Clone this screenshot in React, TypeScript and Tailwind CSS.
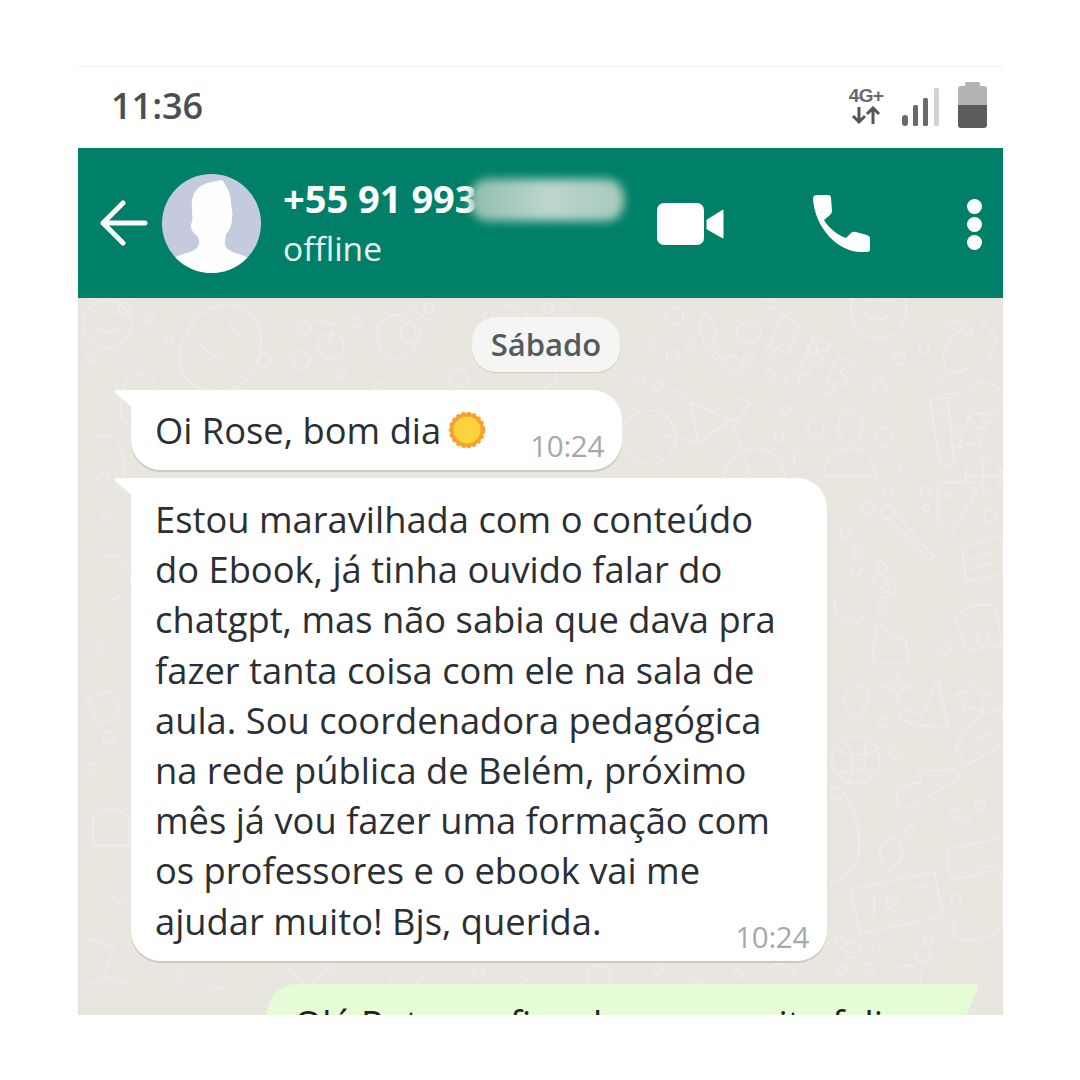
import type { ReactNode } from "react";

const font = "font-['Open_Sans','Noto_Sans',sans-serif]";

// wallpaper doodles, very faint, roughly where the whatsapp pattern puts them
const doodles = [
  // left column
  "M28 2a24 24 0 1 0 1 0zM14 28q14 12 28 0M16 14h6M34 14h6",
  "M140 8c26-6 44 10 42 40s-24 50-52 44-34-26-26-48 18-32 36-36zM122 46q8 12 24 14M150 26l10 10",
  "M50 80q18-12 28 8t-12 40l-22-4q-6-26 6-44zM56 120q8 6 16 0",
  "M12 140q24-10 32 14t-14 42M20 260q22-8 30 12t-18 30",
  "M8 400l24-8 10 26-24 8zM14 520q18-18 36 0v28H14zM8 640l28 10-10 26",
  // top middle
  "M300 30c6-18 30-18 36 0s-6 30-18 30-22-12-18-30zM330 8l20 14M230 20l26 6-6 22",
  "M420 10q20-8 30 8M440 60q22-10 34 8t-12 22",
  // phone and heart
  "M628 14q-8 6-6 18c4 18 14 32 32 42q10 4 14-4l-14-14-8 6q-10-8-12-20l6-6z",
  "M658 30q6-8 12-2 8-6 12 2t-12 16q-12-6-12-16z",
  // bff tags
  "M704 16l18 10-12 30-18-10zM736 38l16 8-4 8-8-4-2 6 8 4-4 8-8-4-6 14-8-4zM760 58l16 8-4 8-8-4-2 6 8 4-4 8-8-4-6 14-8-4z",
  // smiley
  "M800-16a28 28 0 1 0 1 0zM786 14q14 14 28 0M788 2h8M806 2h8",
  // bike
  "M570 112a27 27 0 1 0 1 0zM572 136l36-36-12-8-6 6M612 104l46 20 14-20-14-4M612 104l8 40 36-24M620 144l-40-8M654 126l18 54M676 150a30 30 0 1 0 1 0z",
  // people
  "M737 122a8 8 0 1 0 1 0zM772 112c8 0 13 8 12 18s-8 16-12 16-12-6-12-16 4-18 12-18zM805 130a9 9 0 1 0 1 0zM716 165q0-16 20-18M746 178c0-18 10-28 26-28s24 10 26 28zM804 154q16 4 20 22",
  // right top
  "M866 28q14-8 22-2l-14 14q-14 14-6 30 8 8 22 0M900 20l20 20-10 20M924 10q10 10 4 24M866 96l20-2q4 0 6-6 12-8 26 0 12 10 6 20-10 10-30 6l-6 6M858 100l-6 2 10 66 14-2-6-66z",
  // star, lemon, hat
  "M892 118l5 11 12 1-9 8 3 12-11-6-11 6 3-12-9-8 12-1zM905 160a18 18 0 1 0 1 0zM905 160v36M888 178h36M860 184h44l-30 50-14-10z",
  // brush, bolt, card
  "M808 218l8-4 40 44-4 4zM802 210q6-6 16 0l-4 12-10-2zM800 260l10 10-6 8 14 20-24-14 6-8zM884 250l40-14v40l-36 8zM892 262l24-8M892 272l24-8",
  "M768 296q-10 2-12 10 0 14 12 20M802 276q14 4 16 16-8 10-20 6M878 322q10-20 40-14l6 40-36 4zM800 324l14 16 14 2 2 22h-36l2-22z",
  // lower right
  "M774 390c8-6 18 0 16 10s-8 16-12 20c-6-4-12-10-12-18q0-8 8-12zM820 374l3 12 12 3-12 3-3 12-3-12-12-3 12-3zM895 384l5 10 12 2-9 7 2 12-10-6-11 6 3-12-9-7 12-2zM860 380l10 50-30-2-20-8 10-10 14 8zM878 450q16-34 46-40l4 34-40 24zM894 442l24-8",
  "M777 438a24 24 0 1 0 1 0zM755 450q22 14 46 0M757 476q22-8 44 0M766 442q14 22 4 42M790 442q-10 22 4 42M818 490l26-6-4-8 6-4 32 0 4 8-52 30-10 0zM850 478h10",
  "M768 500q16 24 12 60-12 20-28 26M810 542c8-4 14 2 14 12s-8 14-12 18c-6-4-12-10-10-18q0-8 8-12zM868 552l56-12M872 552q-8 14 4 30l50-12M900 570q24-8 24 14v46q-24 20-48 8v-20",
  "M772 592l84-18 10 44-84 18zM796 598v22M808 596l12 8-10 8zM836 590l14-2",
  // bottom left and middle
  "M8 690q20-20 44 0M120 680q8 12 24 10M210 672l18 18 20-18M310 680q16 18 34 0M440 676l18 14M520 668a12 12 0 1 0 1 0M610 680l30 12M690 670q16-10 28 6M818 672q14-8 26 2l-6 26",
];

const dots: [number, number, number][] = [
  [186, 62, 7], [226, 30, 6], [222, 62, 9], [46, 10, 6], [50, 62, 4], [252, 48, 13], [278, 24, 5], [262, 76, 5], [170, 104, 4], [300, 88, 4],
  [332, 34, 10], [350, 10, 5], [380, 80, 9], [410, 18, 5], [470, 10, 5], [492, 38, 7], [510, 24, 5], [488, 8, 4], [596, 18, 9], [576, 46, 4],
  [594, 58, 6], [613, 47, 5], [562, 80, 4], [580, 88, 5], [670, 61, 5], [692, 53, 5], [692, 77, 5], [714, 82, 7], [694, 6, 5], [734, 50, 5],
  [802, 90, 7], [821, 60, 6], [800, 80, 4], [846, 50, 5], [860, 85, 4], [866, 110, 5], [731, 94, 4], [708, 112, 5], [701, 138, 5], [889, 32, 5],
  [909, 120, 5], [878, 144, 5], [810, 192, 5], [847, 193, 5], [870, 196, 3], [848, 210, 3], [912, 218, 6], [790, 210, 6], [767, 235, 5], [780, 254, 6],
  [779, 320, 5], [805, 310, 6], [778, 272, 5], [867, 351, 5], [904, 340, 6], [805, 424, 5], [817, 455, 5], [902, 508, 5], [877, 516, 5], [889, 525, 4],
  [832, 533, 5], [759, 496, 6], [878, 602, 5], [762, 644, 6], [775, 652, 8], [798, 651, 4], [845, 656, 8], [850, 642, 4], [764, 672, 5], [790, 671, 5],
  [18, 350, 5], [30, 440, 6], [14, 470, 4], [40, 600, 5], [24, 180, 5], [26, 220, 4], [70, 20, 5], [88, 150, 4], [12, 60, 4], [90, 40, 4],
  [250, 670, 5], [400, 675, 5], [580, 672, 5], [660, 676, 4], [100, 678, 4],
];

function Wallpaper() {
  return (
    <svg
      className="absolute inset-0 h-full w-full"
      viewBox="0 0 925 717"
      fill="none"
      stroke="#eeece7"
      strokeWidth="1.6"
      strokeLinejoin="round"
      strokeLinecap="round"
    >
      {doodles.map((d, i) => (
        <path key={i} d={d} />
      ))}
      {dots.map(([cx, cy, r], i) => (
        <circle key={i} cx={cx} cy={cy} r={r} />
      ))}
    </svg>
  );
}

function StatusIcons() {
  return (
    <div className="flex items-center gap-[16px] pb-[5px]">
      <div className="flex w-[40px] flex-col items-center font-['Liberation_Sans',sans-serif] text-[#686868] leading-none">
        <span className="h-[20px] text-[19px] font-bold tracking-[-0.6px]">4G+</span>
        <svg width="30" height="19" viewBox="0 0 30 19" fill="none" stroke="#555" strokeWidth="3">
          <path d="M8 1v16M2 10l6 6 6-6M22 18V3M16 8l6-6 6 6" />
        </svg>
      </div>
      <svg width="38" height="39" viewBox="0 0 38 39" className="mt-[4px]">
        <rect x="0" y="27" width="6" height="11" rx="3" fill="#6a6a6a" />
        <rect x="11" y="17" width="5" height="21" rx="1.5" fill="#6a6a6a" />
        <rect x="21" y="10" width="5" height="28" rx="1.5" fill="#6a6a6a" />
        <rect x="32" y="0" width="5" height="38" rx="1" fill="#d2d2d2" />
      </svg>
      <div className="ml-[2px] flex w-[29px] flex-col items-center">
        <div className="h-[4px] w-[15px] rounded-t-[2px] bg-[#b3b3b3]" />
        <div className="h-[19px] w-full rounded-t-[3px] bg-[#b3b3b3]" />
        <div className="h-[23px] w-full rounded-b-[3px] bg-[#5c5c5c]" />
      </div>
    </div>
  );
}

function Avatar() {
  return (
    <div className="h-[99px] w-[99px] shrink-0 overflow-hidden rounded-full bg-[#c5cbde]">
      <svg viewBox="0 0 99 99" className="h-full w-full" fill="#fdfefd">
        <path d="M60 6c-8 1-18 3-24 8-5 5-7 12-6 20 0 6 1 11 0 14-2 3-1 7 1 10 2 2 5 4 6 8 1 5-2 9-7 11-7 3-14 4-20 8v14h78V85c-6-4-13-5-19-8-4-2-7-5-6-10l1-7c4-4 6-10 6-16 1-5 0-9-1-14 0-10-4-18-9-24z" />
      </svg>
    </div>
  );
}

function HeaderActions() {
  return (
    <div className="flex items-center pt-[2px]">
      <svg width="68" height="44" viewBox="0 0 68 44" fill="#fff">
        <rect x="0" y="1" width="47" height="42" rx="7" />
        <path d="M50 18 66 8v28L50 27z" strokeLinejoin="round" stroke="#fff" strokeWidth="1" />
      </svg>
      <svg width="60" height="60" viewBox="0 0 60 60" fill="#fff" className="ml-[87px]">
        <path d="M1 5q0-4 4-4h11q3 0 3 3l1 13q0 2-2 4l-6 5c5 8 12 14 22 18l5-5q2-2 5-1l11 3q3 1 3 3v11q0 3-3 3h-6C26 58 3 34 1 5z" />
      </svg>
      <div className="ml-[95px] mr-[21px] flex flex-col gap-[3px]">
        <div className="h-[15px] w-[15px] rounded-full bg-white" />
        <div className="h-[15px] w-[15px] rounded-full bg-white" />
        <div className="h-[15px] w-[15px] rounded-full bg-white" />
      </div>
    </div>
  );
}

function Tail({ color = "#fff", side = "left" }: { color?: string; side?: "left" | "right" }) {
  return side === "left" ? (
    <svg width="20" height="20" viewBox="0 0 20 20" className="absolute -left-[17px] top-0">
      <path d="M3 0h17v19L1 3q-1-3 2-3z" fill={color} />
    </svg>
  ) : (
    <svg width="20" height="44" viewBox="0 0 20 44" className="absolute -right-[17px] top-0">
      <path d="M0 0h14q4 0 3 4L0 44z" fill={color} />
    </svg>
  );
}

function Bubble({ children, time, className }: { children: ReactNode; time: string; className: string }) {
  return (
    <div className={`relative bg-white rounded-b-[30px] rounded-tr-[30px] shadow-[0_2px_1px_rgba(0,0,0,0.13)] ${className}`}>
      <Tail />
      {children}
      <span className="absolute bottom-[6px] right-[18px] text-[29.5px] leading-[36px] text-[#a3a9ad] tracking-[-0.3px]">
        {time}
      </span>
    </div>
  );
}

export default function App() {
  return (
    <div className={`h-[1080px] w-[1080px] bg-white pl-[78px] pr-[77px] pt-[66px] ${font}`}>
      <div className="flex h-[949px] flex-col overflow-hidden border-t border-[#efefef]">
        {/* status bar */}
        <div className="flex h-[81px] shrink-0 items-center justify-between pl-[33px] pr-[16px]">
          <span className="text-[36px] font-semibold leading-none text-[#4b4f52] pb-[4px]">11:36</span>
          <StatusIcons />
        </div>

        {/* chat header */}
        <div className="flex h-[150px] shrink-0 items-center justify-between bg-[#008069] text-white">
          <div className="flex items-center">
            <svg width="48" height="46" viewBox="0 0 48 46" fill="none" stroke="#fff" strokeWidth="5" strokeLinecap="round" strokeLinejoin="round" className="ml-[22px] mr-[14px]">
              <path d="M45 23H3M23 3 3 23l20 20" />
            </svg>
            <Avatar />
            <div className="ml-[22px] relative">
              <div className="text-[38px] font-bold leading-[46px] mt-[-1px] whitespace-nowrap">+55 91 993</div>
              <div className="text-[33.5px] leading-[44px] text-[#e4f2ee] mt-[5px]">offline</div>
              {/* blurred part of the number */}
              <div className="absolute left-[187px] top-[3px] h-[42px] w-[154px] rounded-[18px] bg-gradient-to-r from-[#8fbdae] via-[#bcd6cd] to-[#a9cabd] blur-[5px]" />
            </div>
          </div>
          <HeaderActions />
        </div>

        {/* messages */}
        <div className="relative flex-1 overflow-hidden bg-[#e9e6e0] border-l border-[#e2e0da]">
          <Wallpaper />
          <div className="relative flex flex-col pl-[52px] pt-[19px]">
            <div className="self-start ml-[341px] rounded-[24px] bg-[#f5f5f3] w-[148px] justify-center h-[55px] flex items-center text-[31px] font-semibold text-[#545b60] shadow-[0_1px_1px_rgba(0,0,0,0.12)]">
              Sábado
            </div>

            <Bubble time="10:24" className="mt-[18px] h-[80px] w-[491px] pl-[24px] pt-[15px] text-[36.3px] leading-[50px] text-[#2b2f33]">
              <span className="flex items-center">
                Oi Rose, bom dia
                <svg width="38" height="38" viewBox="0 0 38 38" className="ml-[7px]">
                  <circle cx="19" cy="19" r="17" fill="#f6a02f" stroke="#f6a02f" strokeWidth="2.5" strokeDasharray="3.5 2.2" />
                  <circle cx="19" cy="19" r="13.5" fill="#fdd33d" />
                </svg>
              </span>
            </Bubble>

            <Bubble time="10:24" className="mt-[8px] h-[483px] w-[696px] pl-[24px] pt-[16px] text-[36.3px] leading-[50.2px] text-[#2b2f33]">
              <p>Estou maravilhada com o conteúdo</p>
              <p>do Ebook, já tinha ouvido falar do</p>
              <p>chatgpt, mas não sabia que dava pra</p>
              <p>fazer tanta coisa com ele na sala de</p>
              <p>aula. Sou coordenadora pedagógica</p>
              <p>na rede pública de Belém, próximo</p>
              <p>mês já vou fazer uma formação com</p>
              <p>os professores e o ebook vai me</p>
              <p>ajudar muito! Bjs, querida.</p>
            </Bubble>

            <div className="relative mt-[23px] ml-[136px] h-[60px] w-[697px] rounded-tl-[30px] bg-[#e5fcd4] pl-[27px] pt-[14px] text-[36.3px] font-medium leading-[50px] text-[#1f2326] whitespace-nowrap">
              <Tail color="#e5fcd4" side="right" />
              Olá Rute, eu fico deveras muito feliz
            </div>
          </div>
        </div>
      </div>
    </div>
  );
}
